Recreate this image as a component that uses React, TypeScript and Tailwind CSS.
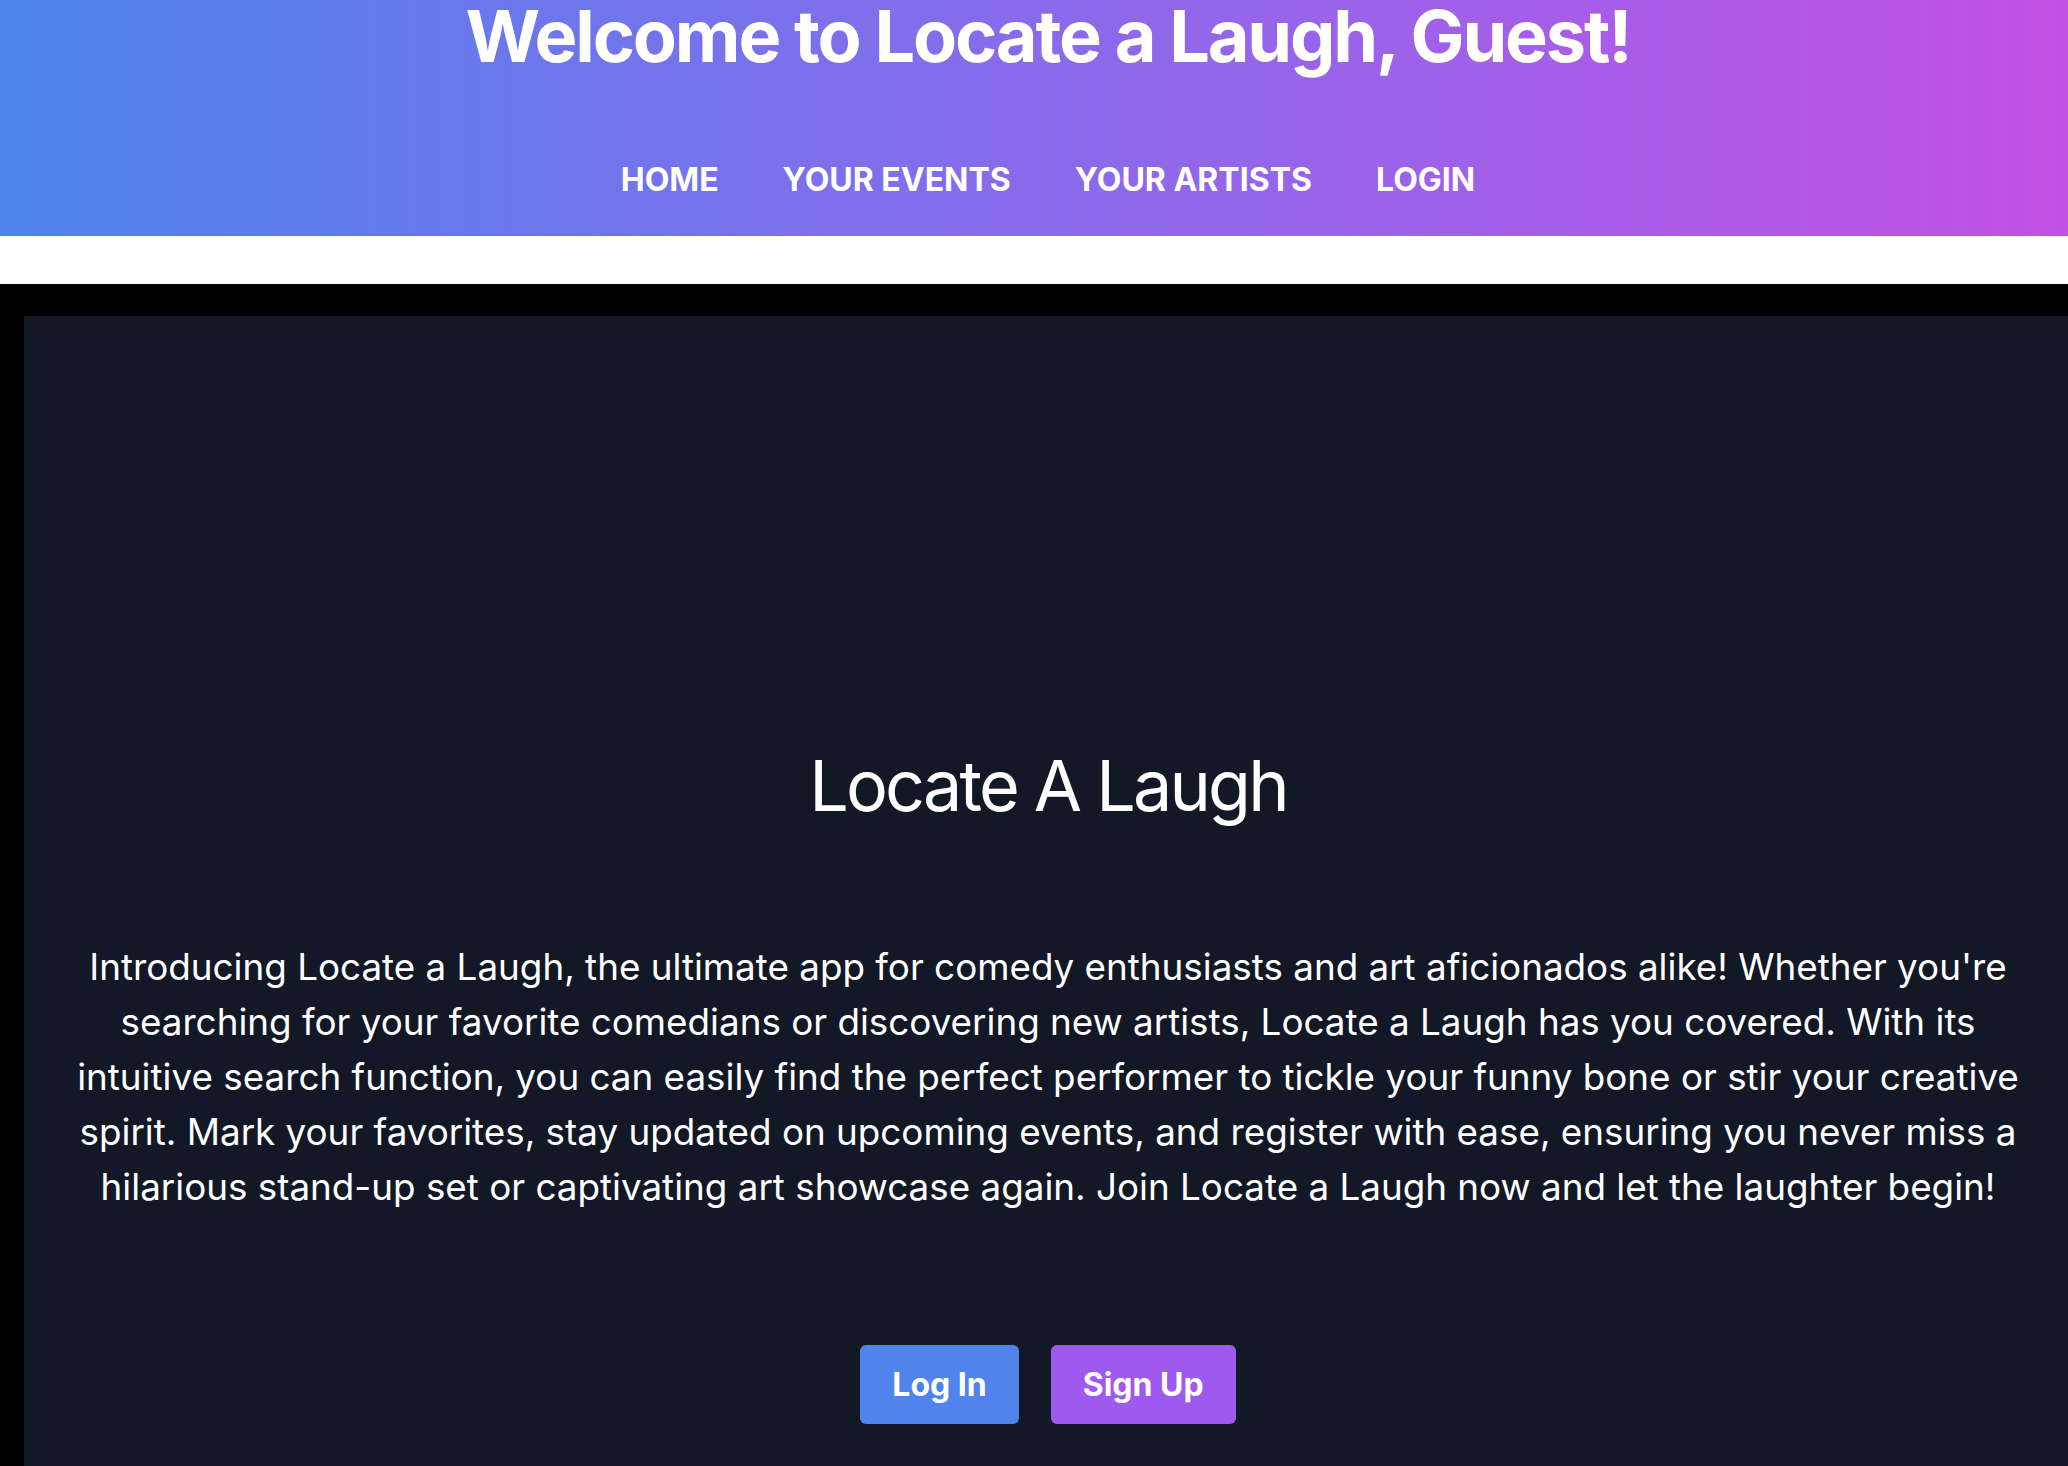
import React from 'react';

const navLinks = ['HOME', 'YOUR EVENTS', 'YOUR ARTISTS', 'LOGIN'];

const Header = () => {
  return (
    <header className="h-[236px] w-full bg-linear-to-r/srgb from-[#4e84ee] to-[#c451e6] text-white flex flex-col items-center">
      <h1 className="text-[72px] leading-none font-bold tracking-[-0.03em]">
        Welcome to Locate a Laugh, Guest!
      </h1>
      <nav className="mt-[89px] flex gap-16">
        {navLinks.map((link) => (
          <a
            key={link}
            href="#"
            className="text-[32px] leading-[38px] font-bold"
          >
            {link}
          </a>
        ))}
      </nav>
    </header>
  );
};

const Landing = () => {
  return (
    <div className="bg-[#131827] text-white flex flex-col items-center pt-[435px] pb-[80px]">
      <h2 className="text-[70px] leading-none font-normal tracking-[-0.04em]">
        Locate A Laugh
      </h2>
      <p className="mt-[118px] w-[1960px] text-center text-[36.8px] leading-[55px]">
        Introducing Locate a Laugh, the ultimate app for comedy enthusiasts and
        art aficionados alike! Whether you're searching for your favorite
        comedians or discovering new artists, Locate a Laugh has you covered.
        With its intuitive search function, you can easily find the perfect
        performer to tickle your funny bone or stir your creative spirit. Mark
        your favorites, stay updated on upcoming events, and register with
        ease, ensuring you never miss a hilarious stand-up set or captivating
        art showcase again. Join Locate a Laugh now and let the laughter begin!
      </p>
      <div className="mt-[131px] flex gap-8">
        <button className="h-[79px] px-8 rounded-md bg-[#5083ec] text-[32px] font-bold">
          Log In
        </button>
        <button className="h-[79px] px-8 rounded-md bg-[#9e5aee] text-[32px] font-bold">
          Sign Up
        </button>
      </div>
    </div>
  );
};

export default function App() {
  return (
    <div className="w-full overflow-hidden font-['Inter',sans-serif]">
      <div className="w-[2096px]">
        <Header />
        <div className="h-12 bg-white" />
        <div className="bg-black pt-8 px-6">
          <Landing />
        </div>
      </div>
    </div>
  );
}
